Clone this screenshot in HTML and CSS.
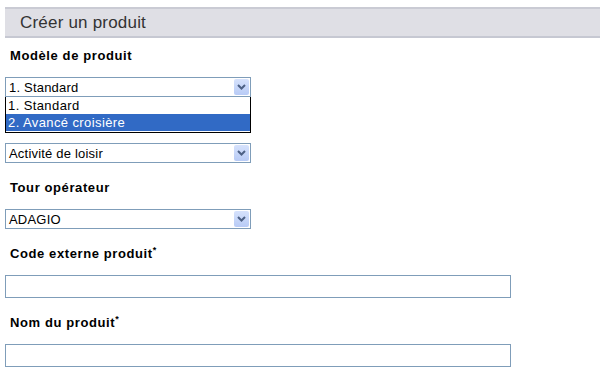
FILE: index.html
```html
<!DOCTYPE html>
<html lang="fr">
<head>
  <meta charset="UTF-8">
  <title>Créer un produit</title>
  <link rel="stylesheet" href="styles.css">
</head>
<body>
  <div class="page">
    <div class="header">Créer un produit</div>

    <div class="field">
      <div class="label">Modèle de produit</div>
      <div class="combo open">
        <div class="select">
          <span class="value">1. Standard</span>
          <span class="arrow">
            <svg width="9" height="6" viewBox="0 0 9 6"><path d="M1 1 L4.5 4.5 L8 1" fill="none" stroke="#4d6185" stroke-width="2"/></svg>
          </span>
        </div>
        <ul class="options">
          <li>1. Standard</li>
          <li class="active">2. Avancé croisière</li>
        </ul>
      </div>
    </div>

    <div class="field">
      <div class="label">&nbsp;</div>
      <div class="select">
        <span class="value">Activité de loisir</span>
        <span class="arrow">
          <svg width="9" height="6" viewBox="0 0 9 6"><path d="M1 1 L4.5 4.5 L8 1" fill="none" stroke="#4d6185" stroke-width="2"/></svg>
        </span>
      </div>
    </div>

    <div class="field">
      <div class="label">Tour opérateur</div>
      <div class="select">
        <span class="value">ADAGIO</span>
        <span class="arrow">
          <svg width="9" height="6" viewBox="0 0 9 6"><path d="M1 1 L4.5 4.5 L8 1" fill="none" stroke="#4d6185" stroke-width="2"/></svg>
        </span>
      </div>
    </div>

    <div class="field">
      <div class="label">Code externe produit<sup>*</sup></div>
      <input type="text" class="text">
    </div>

    <div class="field">
      <div class="label">Nom du produit<sup>*</sup></div>
      <input type="text" class="text">
    </div>
  </div>
</body>
</html>
```

FILE: styles.css
```css
body {
  margin: 0;
  background: #fff;
  font-family: 'Liberation Sans', Arial, sans-serif;
  color: #000;
}

.page {
  padding: 7px 0 0 5px;
}

.header {
  height: 27px;
  line-height: 28px;
  background: #dfdfe5;
  border-top: 2px solid #cacbd4;
  border-bottom: 2px solid #c6c8d2;
  padding-left: 15px;
  margin-bottom: 1px;
  font-size: 17px;
  letter-spacing: 0.2px;
  color: #333;
}

.field {
  padding-top: 9px;
  margin-bottom: 8px;
}

.label {
  font-size: 13px;
  font-weight: bold;
  letter-spacing: 0.6px;
  line-height: 16px;
  margin: 0 0 13px 5px;
}

.label sup {
  font-size: 9px;
  line-height: 0;
}

.combo {
  position: relative;
  width: 246px;
}

.select {
  box-sizing: border-box;
  width: 246px;
  height: 20px;
  border: 1px solid #7f9db9;
  display: flex;
  align-items: center;
  justify-content: space-between;
  background: #fff;
  font-size: 13px;
  letter-spacing: 0.2px;
}

.value {
  padding-left: 3px;
}

.arrow {
  width: 15px;
  height: 16px;
  margin-right: 1px;
  background: linear-gradient(#d6e2fc, #b8cbf6);
  border-radius: 2px;
  display: flex;
  align-items: center;
  justify-content: center;
}

.options {
  position: absolute;
  top: 20px;
  left: 0;
  box-sizing: border-box;
  width: 246px;
  margin: 0;
  padding: 0 0 1px;
  list-style: none;
  background: #fff;
  border: 1px solid #000;
  border-top: none;
  font-size: 13px;
  letter-spacing: 0.4px;
}

.options li {
  height: 17px;
  line-height: 17px;
  padding-left: 2px;
}

.options .active {
  background: #316ac5;
  color: #fff;
}

.text {
  display: block;
  box-sizing: border-box;
  width: 506px;
  height: 23px;
  margin: 0;
  border: 1px solid #7f9db9;
  font-size: 13px;
}
```
